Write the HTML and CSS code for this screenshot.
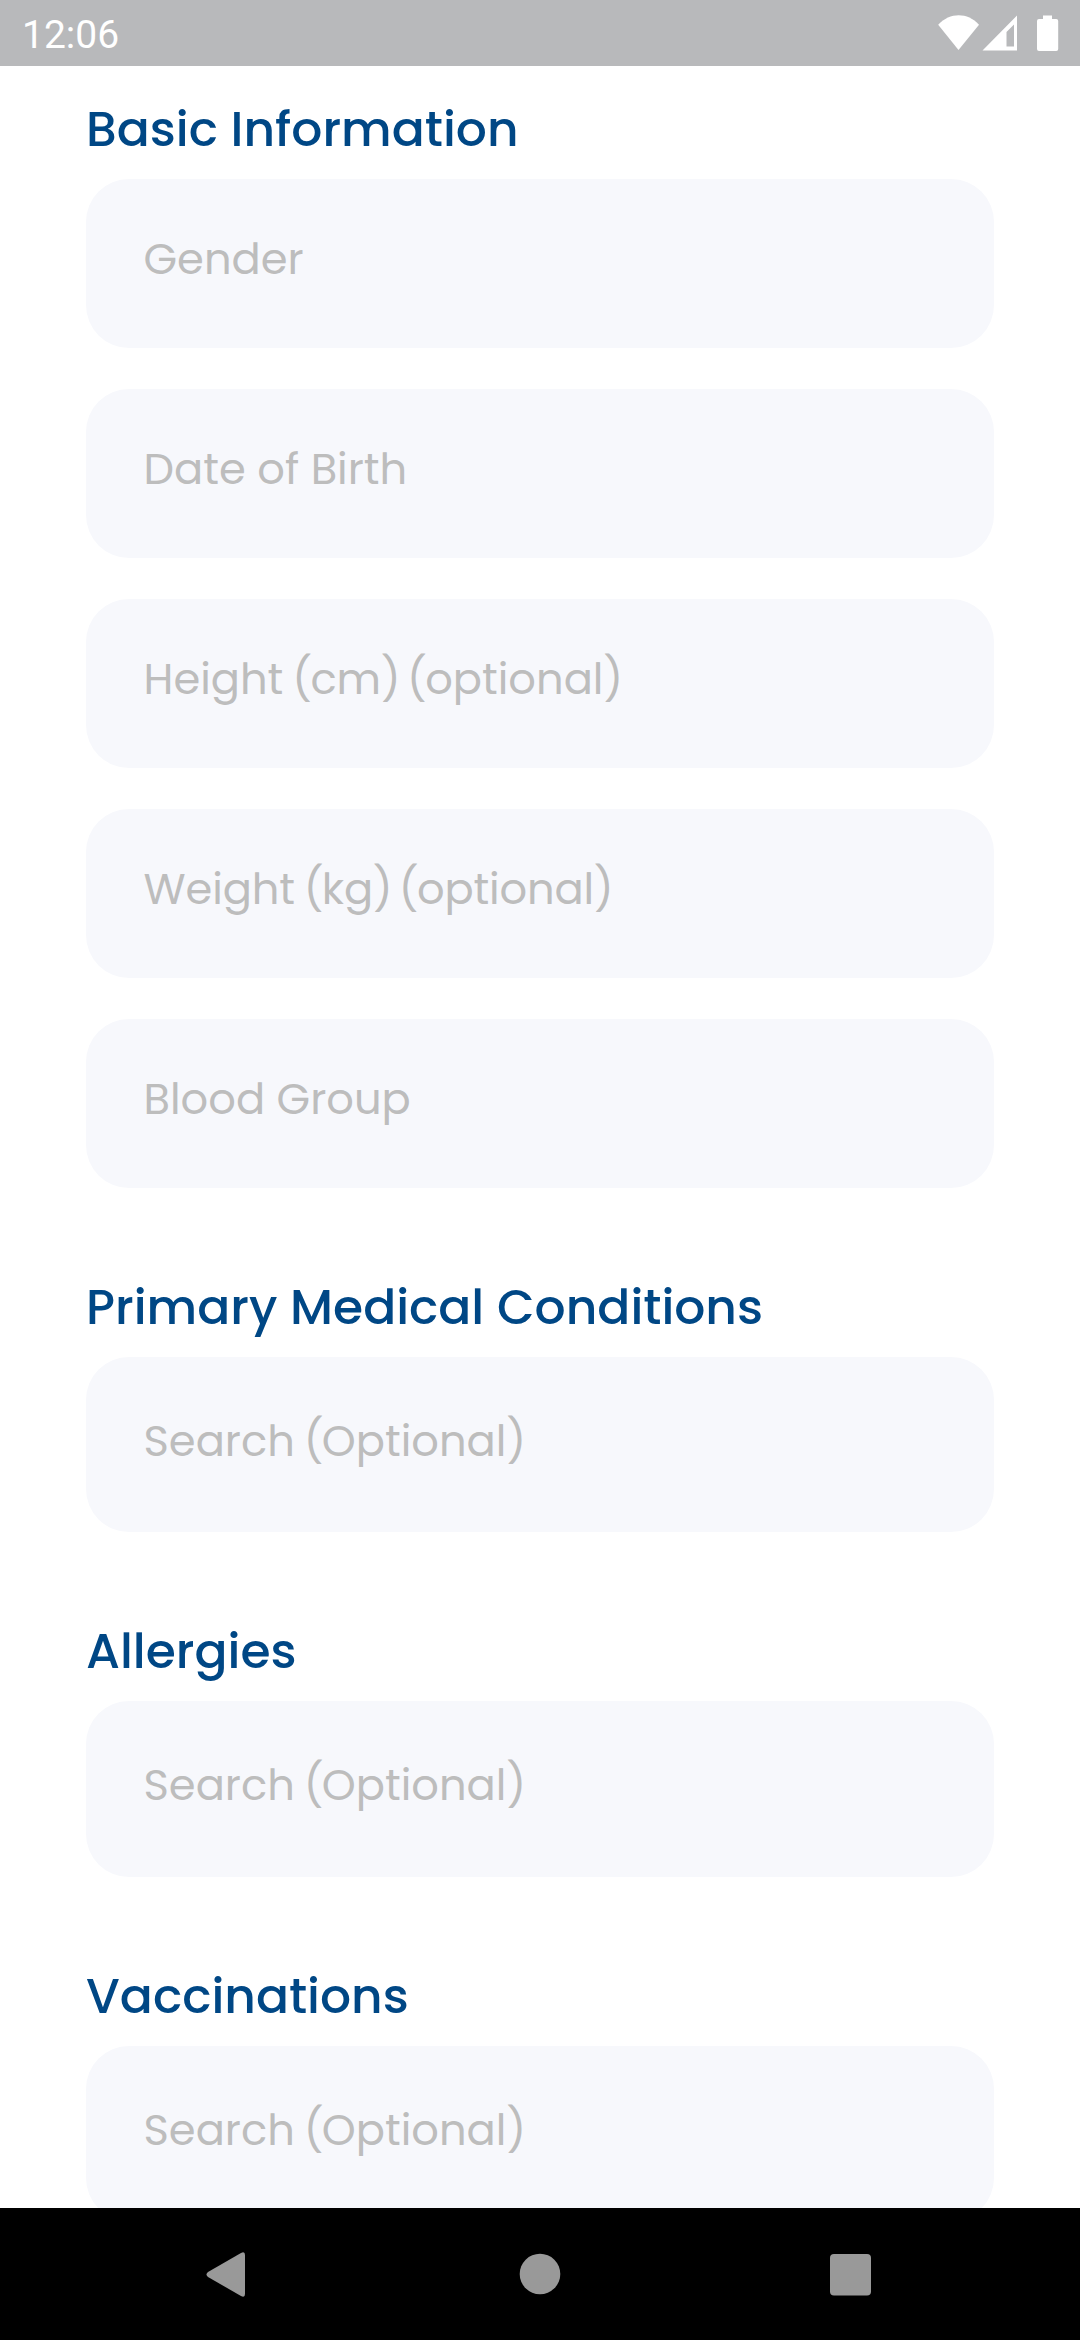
FILE: index.html
```html
<!DOCTYPE html>
<html lang="en">
<head>
<meta charset="utf-8">
<title>Medical profile</title>
<link rel="stylesheet" href="styles.css">
</head>
<body>
<header class="status-bar">
  <span class="clock">12:06</span>
  <svg class="status-icons" width="122" height="38" viewBox="0 0 122 38" fill="#fff">
    <path d="M0.2 9.8C12-2.800 29.500-2.800 41 9.800L20.500 35Z"/>
    <path fill-rule="evenodd" d="M79 0.500V35.500H44.500ZM76 9.500L68.500 17V31.500H76Z"/>
    <path d="M105 0.500h9v3.500h4.200a2 2 0 0 1 2 2v28a2 2 0 0 1-2 2h-17.200a2 2 0 0 1-2-2v-28a2 2 0 0 1 2-2h4z"/>
  </svg>
</header>
<main class="form">
  <section class="group">
    <h2 class="heading">Basic Information</h2>
    <div class="fields">
      <div class="field">Gender</div>
      <div class="field">Date of Birth</div>
      <div class="field">Height<span class="gap"> </span><span class="open">(</span>cm)<span class="gap-wide"> </span><span class="open">(</span>optional)</div>
      <div class="field tight">Weight<span class="gap"> </span><span class="open">(</span>kg)<span class="gap-wide"> </span><span class="open">(</span>optional)</div>
      <div class="field">Blood Group</div>
    </div>
  </section>
  <section class="group">
    <h2 class="heading">Primary Medical Conditions</h2>
    <div class="field search">Search<span class="gap"> </span><span class="open">(</span>Optional)</div>
  </section>
  <section class="group">
    <h2 class="heading">Allergies</h2>
    <div class="field search">Search<span class="gap"> </span><span class="open">(</span>Optional)</div>
  </section>
  <section class="group">
    <h2 class="heading">Vaccinations</h2>
    <div class="field search">Search<span class="gap"> </span><span class="open">(</span>Optional)</div>
  </section>
</main>
<nav class="nav-bar">
  <svg width="1080" height="132" viewBox="0 0 1080 132" fill="#999">
    <path d="M208 64L241 45Q245 43 245 47V86Q245 90 241 88L208 69Q205 66.500 208 64Z"/>
    <circle cx="540" cy="66" r="20.300"/>
    <rect x="830" y="46" width="41" height="41.500" rx="4"/>
  </svg>
</nav>
</body>
</html>
```
FILE: styles.css
```css
* { box-sizing: border-box; }
body {
  margin: 0;
  width: 1080px;
  height: 2340px;
  display: flex;
  flex-direction: column;
  overflow: hidden;
  background: #fff;
  font-family: Poppins, Inter, sans-serif;
}
.status-bar {
  flex: none;
  height: 66px;
  padding: 0 20px 0 22px;
  display: flex;
  justify-content: space-between;
  background: #b8b9bb;
  color: #fff;
}
.clock { font: 39px/70px Roboto, sans-serif; }
.status-icons { margin-top: 15px; }
.form {
  flex: 1;
  min-height: 0;
  overflow: hidden;
  padding: 33px 86px 0;
}
.group { margin-bottom: 89px; }
.heading {
  margin: 0;
  height: 80px;
  font-size: 48.75px;
  line-height: 60px;
  font-weight: 500;
  color: #004785;
  white-space: nowrap;
}
.fields { display: flex; flex-direction: column; gap: 41px; }
.field {
  height: 169px;
  padding: 50px 57.5px 0;
  border-radius: 43px;
  background: #f7f8fc;
  font-size: 43.2px;
  line-height: 60px;
  color: #bdbdbd;
  white-space: nowrap;
}
.gap { letter-spacing: -2.7px; }
.gap-wide { letter-spacing: -5.3px; }
.open { letter-spacing: -1.4px; }
.tight { letter-spacing: -0.14px; }
.search { height: 175.3px; padding-top: 54px; }
.nav-bar { flex: none; height: 132px; background: #000; }
.nav-bar svg { display: block; }
```
